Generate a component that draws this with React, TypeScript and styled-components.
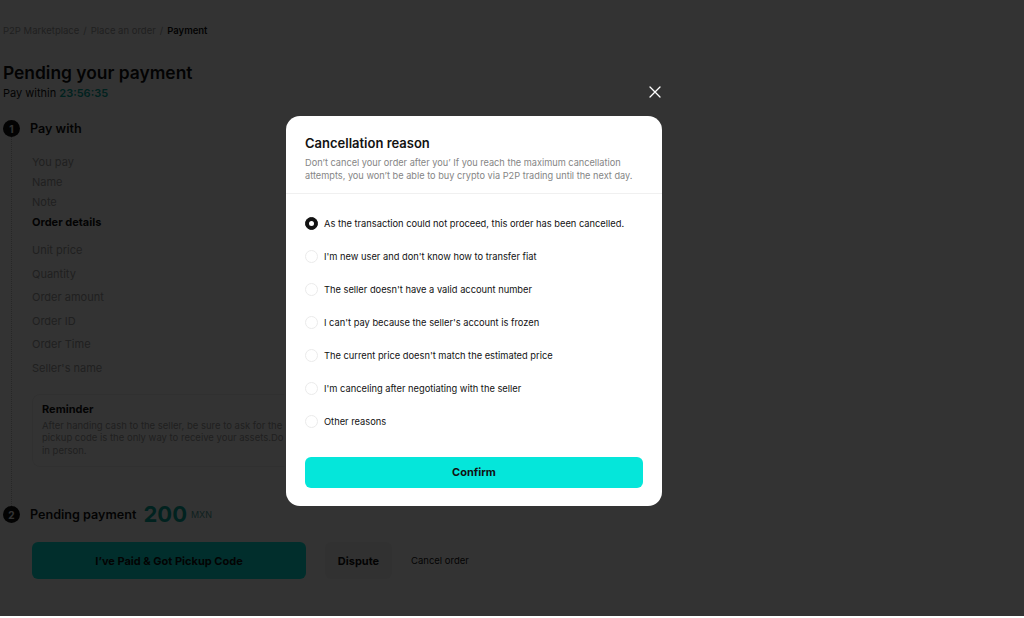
import styled, { createGlobalStyle } from 'styled-components'
import { useState } from 'react'

const GlobalStyle = createGlobalStyle`
  html, body {
    margin: 0;
    padding: 0;
    background: #ffffff;
    font-family: Inter, "Noto Sans", Arial, sans-serif;
    color: #121212;
  }
  * { box-sizing: border-box; }
`

const detailRows = ['Unit price', 'Quantity', 'Order amount', 'Order ID', 'Order Time', "Seller's name"]

const reasons = [
  'As the transaction could not proceed, this order has been cancelled.',
  "I'm new user and don't know how to transfer fiat",
  "The seller doesn't have a valid account number",
  "I can't pay because the seller's account is frozen",
  "The current price doesn't match the estimated price",
  "I'm canceling after negotiating with the seller",
  'Other reasons',
]

export default function App() {
  const [selected, setSelected] = useState(0)

  return (
    <>
      <GlobalStyle />
      <Page>
        <Breadcrumb>
          <span>P2P Marketplace</span>
          <Sep>/</Sep>
          <span>Place an order</span>
          <Sep>/</Sep>
          <Current>Payment</Current>
        </Breadcrumb>
        <Title>Pending your payment</Title>
        <PayWithin>
          Pay within <Timer>23:56:35</Timer>
        </PayWithin>

        <StepHead $gap={20}>
          <StepNum>1</StepNum>
          <StepTitle>Pay with</StepTitle>
        </StepHead>
        <StepBody>
          <InfoRow>You pay</InfoRow>
          <InfoRow>Name</InfoRow>
          <InfoRow>Note</InfoRow>
          <InfoRow $bold>Order details</InfoRow>
          <DetailList>
            {detailRows.map((r) => (
              <DetailRow key={r}>{r}</DetailRow>
            ))}
          </DetailList>
          <Reminder>
            <ReminderTitle>Reminder</ReminderTitle>
            <ReminderText>
              After handing cash to the seller, be sure to ask for the “Pickup code”. The
              <br />
              pickup code is the only way to receive your assets.Do not share it with anyone except the seller
              <br />
              in person.
            </ReminderText>
          </Reminder>
        </StepBody>

        <StepHead $gap={0}>
          <StepNum>2</StepNum>
          <StepTitle>Pending payment</StepTitle>
          <Amount>200</Amount>
          <Currency>MXN</Currency>
        </StepHead>
        <Actions>
          <PaidButton>I’ve Paid &amp; Got Pickup Code</PaidButton>
          <DisputeButton>Dispute</DisputeButton>
          <CancelLink>Cancel order</CancelLink>
        </Actions>
      </Page>

      <Overlay>
        <ModalWrap>
          <CloseButton aria-label="close">
            <svg width="12" height="12" viewBox="0 0 12 12" fill="none">
              <path d="M1 1L11 11M11 1L1 11" stroke="#ffffff" strokeWidth="1.3" strokeLinecap="round" />
            </svg>
          </CloseButton>
          <Modal>
            <ModalHeader>
              <ModalTitle>Cancellation reason</ModalTitle>
              <ModalDesc>
                Don’t cancel your order after you’ If you reach the maximum cancellation attempts, you won’t be able to buy crypto via P2P trading until the next day.
              </ModalDesc>
            </ModalHeader>
            <ReasonList>
              {reasons.map((r, i) => (
                <Reason key={r} onClick={() => setSelected(i)}>
                  <Radio $checked={selected === i} />
                  <span>{r}</span>
                </Reason>
              ))}
            </ReasonList>
            <ConfirmButton>Confirm</ConfirmButton>
          </Modal>
        </ModalWrap>
      </Overlay>
    </>
  )
}

const Page = styled.main`
  width: 1024px;
  height: 618px;
  padding: 24px 0 0 3px;
  overflow: hidden;
`

const Breadcrumb = styled.div`
  display: flex;
  align-items: center;
  font-size: 9.5px;
  line-height: 14px;
  color: #9e9e9e;
`

const Sep = styled.span`
  margin: 0 4px;
`

const Current = styled.span`
  color: #121212;
  font-weight: 600;
`

const Title = styled.h1`
  margin: 23px 0 0;
  font-size: 17.4px;
  line-height: 24px;
  font-weight: 600;
`

const PayWithin = styled.div`
  margin-top: 1px;
  font-size: 11px;
  line-height: 14px;
`

const Timer = styled.span`
  color: #05a89b;
  font-weight: 600;
`

const StepHead = styled.div<{ $gap: number }>`
  display: flex;
  align-items: center;
  height: 17px;
  margin-top: ${(p) => p.$gap}px;
`

const StepNum = styled.div`
  width: 17px;
  height: 17px;
  border-radius: 50%;
  background: #121212;
  color: #ffffff;
  font-size: 10px;
  font-weight: 700;
  display: flex;
  align-items: center;
  justify-content: center;
  margin-right: 10px;
`

const StepTitle = styled.div`
  font-size: 12.6px;
  font-weight: 600;
`

const Amount = styled.div`
  margin-left: 7px;
  font-size: 22px;
  font-weight: 700;
  color: #05a89b;
  line-height: 17px;
`

const Currency = styled.div`
  margin-left: 4px;
  font-size: 9px;
  color: #4fa39c;
`

const StepBody = styled.div`
  margin-left: 8px;
  border-left: 1px dotted #c4c4c4;
  padding: 15px 0 39px 20px;
`

const InfoRow = styled.div<{ $bold?: boolean }>`
  height: 20px;
  line-height: 20px;
  font-size: 11px;
  color: ${(p) => (p.$bold ? '#121212' : '#9e9e9e')};
  font-weight: ${(p) => (p.$bold ? 700 : 400)};
`

const DetailList = styled.div`
  margin-top: 7px;
`

const DetailRow = styled.div`
  height: 23.6px;
  line-height: 23.6px;
  font-size: 11px;
  color: #9e9e9e;
`

const Reminder = styled.div`
  margin-top: 13px;
  width: 253px;
  overflow: hidden;
  border: 1px solid #f0f0f0;
  border-right-color: transparent;
  border-radius: 8px 0 0 8px;
  padding: 7px 0 9px 9px;
`

const ReminderTitle = styled.div`
  font-size: 11px;
  line-height: 14px;
  font-weight: 700;
  color: #121212;
`

const ReminderText = styled.div`
  margin-top: 4px;
  font-size: 9.5px;
  line-height: 12.5px;
  color: #9e9e9e;
  white-space: nowrap;
`

const Actions = styled.div`
  display: flex;
  align-items: center;
  gap: 19px;
  margin: 19px 0 0 29px;
`

const PaidButton = styled.button`
  width: 274px;
  height: 37px;
  border: none;
  border-radius: 6px;
  background: #05e6da;
  font-family: inherit;
  font-size: 11px;
  font-weight: 700;
  color: #121212;
`

const DisputeButton = styled.button`
  width: 67px;
  height: 37px;
  border: none;
  border-radius: 6px;
  background: #f4f4f4;
  font-family: inherit;
  font-size: 11px;
  font-weight: 700;
  color: #121212;
`

const CancelLink = styled.span`
  font-size: 9.5px;
  color: #121212;
`

const Overlay = styled.div`
  position: fixed;
  left: 0;
  top: 0;
  width: 100%;
  height: calc(100% - 2px);
  background: rgba(0, 0, 0, 0.8);
  display: flex;
  align-items: center;
  justify-content: center;
  padding: 5px 76px 0 0;
`

const ModalWrap = styled.div`
  position: relative;
`

const CloseButton = styled.button`
  position: absolute;
  top: -30px;
  right: 1px;
  width: 12px;
  height: 12px;
  padding: 0;
  border: none;
  background: none;
  display: flex;
`

const Modal = styled.div`
  width: 376px;
  background: #ffffff;
  border-radius: 14px;
  padding-bottom: 18px;
`

const ModalHeader = styled.div`
  padding: 18px 19px 11px;
  border-bottom: 1px solid #f0f0f0;
`

const ModalTitle = styled.div`
  font-size: 13px;
  line-height: 18px;
  font-weight: 600;
`

const ModalDesc = styled.div`
  margin-top: 4px;
  font-size: 9.2px;
  line-height: 13px;
  color: #858585;
`

const ReasonList = styled.div`
  padding: 13px 19px 0;
`

const Reason = styled.div`
  display: flex;
  align-items: center;
  gap: 6px;
  height: 33px;
  font-size: 9.3px;
  color: #121212;
  cursor: pointer;
`

const Radio = styled.span<{ $checked: boolean }>`
  width: 13px;
  height: 13px;
  border-radius: 50%;
  flex: none;
  background: ${(p) => (p.$checked ? '#121212' : '#ffffff')};
  border: 1px solid ${(p) => (p.$checked ? '#121212' : '#ebebeb')};
  display: flex;
  align-items: center;
  justify-content: center;
  &::after {
    content: '';
    display: ${(p) => (p.$checked ? 'block' : 'none')};
    width: 5px;
    height: 5px;
    border-radius: 50%;
    background: #ffffff;
  }
`

const ConfirmButton = styled.button`
  display: block;
  margin: 19px 19px 0;
  width: calc(100% - 38px);
  height: 31px;
  border: none;
  border-radius: 6px;
  background: #05e6da;
  font-family: inherit;
  font-size: 11px;
  font-weight: 700;
  color: #121212;
`
